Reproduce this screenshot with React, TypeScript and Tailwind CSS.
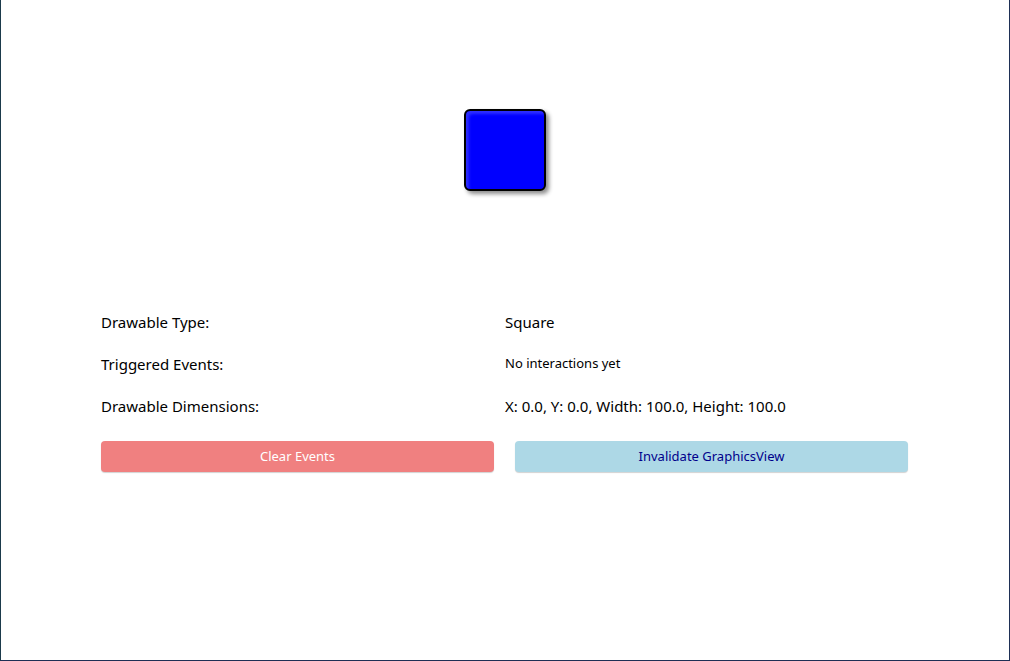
export default function App() {
  return (
    <div className="w-[1010px] h-[661px] bg-white border-l border-r border-b border-l-[#1b3a4b] border-r-[#1e2f55] border-b-[#1e2f55] overflow-hidden font-['Noto_Sans',sans-serif] text-black">
      <div className="h-[312px] flex justify-center pt-[109px]">
        <div className="w-[82px] h-[82px] rounded-[6px] border-2 border-black bg-[#0000ff] [box-shadow:3px_3px_4px_rgba(0,0,0,0.45),inset_3px_3px_3px_rgba(255,255,255,0.18)]" />
      </div>

      <div className="w-[807px] ml-[100px] grid grid-cols-[404px_1fr]">
        <div className="h-[42px] text-[15px] leading-[20px]">Drawable Type:</div>
        <div className="h-[42px] text-[15px] leading-[20px]">Square</div>
        <div className="h-[42px] text-[15px] leading-[20px]">Triggered Events:</div>
        <div className="h-[42px] text-[13px] leading-[18px]">No interactions yet</div>
        <div className="h-[42px] text-[15px] leading-[20px]">Drawable Dimensions:</div>
        <div className="h-[42px] text-[15px] leading-[20px]">X: 0.0, Y: 0.0, Width: 100.0, Height: 100.0</div>
      </div>

      <div className="w-[807px] ml-[100px] mt-[3px] grid grid-cols-2 gap-x-[21px]">
        <button className="h-[31px] rounded-[4px] bg-[#f08080] text-white text-[13px] shadow-[0_1px_1px_rgba(0,0,0,0.18)]">
          Clear Events
        </button>
        <button className="h-[31px] rounded-[4px] bg-[#add8e6] text-[#00008b] text-[13px] shadow-[0_1px_1px_rgba(0,0,0,0.18)]">
          Invalidate GraphicsView
        </button>
      </div>
    </div>
  );
}
